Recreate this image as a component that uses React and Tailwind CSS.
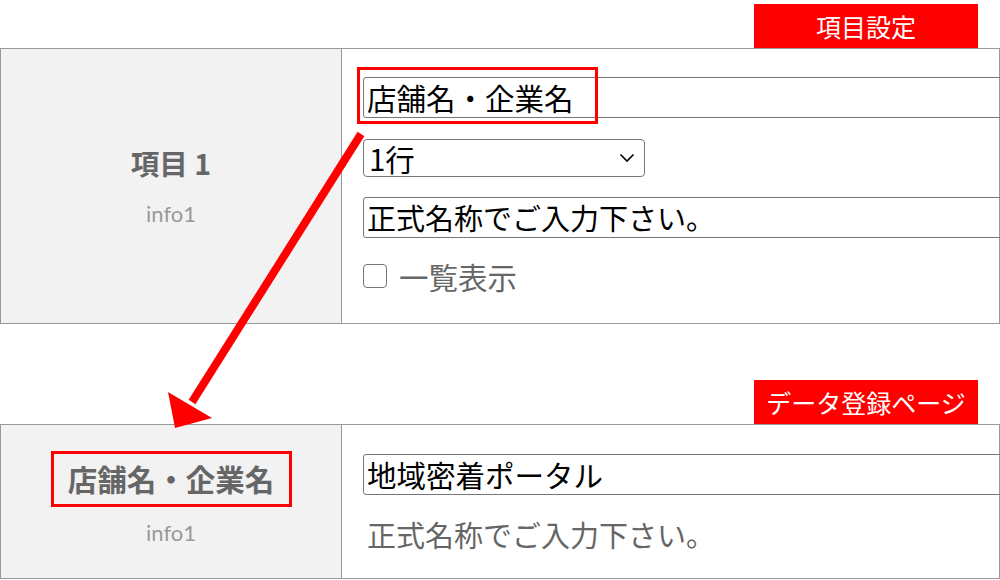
import React from "react";

const JP = { fontFamily: '"Noto Sans CJK JP", "Noto Sans", sans-serif' };
const LATO = { fontFamily: '"Lato", "Noto Sans", sans-serif' };

function Badge({ children }) {
  return (
    <div className="flex justify-end pr-[22px]">
      <div className="w-[224px] h-[44px] bg-[#ff0000] text-white text-[25px] leading-none flex items-center justify-center">
        {children}
      </div>
    </div>
  );
}

function Chevron() {
  return (
    <svg width="16" height="10" viewBox="0 0 16 10" className="block">
      <path d="M1.5 1.5 L8 8 L14.5 1.5" fill="none" stroke="#000" strokeWidth="1.6" />
    </svg>
  );
}

export default function App() {
  return (
    <div
      className="relative w-[1000px] h-[580px] overflow-hidden bg-white"
      style={JP}
    >
      <div className="pt-[4px]">
        <Badge>項目設定</Badge>
      </div>

      {/* Top table */}
      <div className="flex w-[1000px] h-[276px] border border-[#999]">
        <div className="w-[341px] shrink-0 bg-[#f2f2f2] border-r border-[#999] flex flex-col items-center justify-center pb-[2px]">
          <div className="text-[28.5px] font-bold text-[#666] leading-[40px]">項目 1</div>
          <div className="text-[22px] text-[#999] leading-[28px] mt-[17px]" style={LATO}>
            info1
          </div>
        </div>
        <div className="relative flex-1 min-w-0 pl-[21px] pt-[28px]">
          <div className="w-[700px] h-[41px] border border-[#767676] rounded-[3px] pl-[3px] text-[29.5px] leading-[39px] text-black whitespace-nowrap">
            店舗名・企業名
          </div>
          <div className="mt-[21px] w-[282px] h-[38px] border border-[#767676] rounded-[4px] pl-[5px] pr-[9px] flex items-center justify-between text-[29.5px] text-black">
            <span className="leading-[36px]">1行</span>
            <Chevron />
          </div>
          <div className="mt-[20px] w-[700px] h-[41px] border border-[#767676] rounded-[3px] pl-[3px] text-[29px] leading-[39px] text-black whitespace-nowrap">
            正式名称でご入力下さい。
          </div>
          <div className="mt-[20px] flex items-center gap-[12px] text-[29.5px] text-[#666] leading-[36px]">
            <span className="w-[24px] h-[24px] border-[1.5px] border-[#767676] rounded-[4px] bg-white shrink-0" />
            <span>一覧表示</span>
          </div>
          <div className="absolute left-[15px] top-[18px] w-[241px] h-[57px] border-[3px] border-[#ff0000]" />
        </div>
      </div>

      <div className="mt-[56px]">
        <Badge>データ登録ページ</Badge>
      </div>

      {/* Bottom table */}
      <div className="flex w-[1000px] h-[155px] border border-[#999]">
        <div className="w-[341px] shrink-0 bg-[#f2f2f2] border-r border-[#999] flex flex-col items-center justify-center pb-[6px]">
          <div className="border-[3px] border-[#ff0000] w-[241px] h-[56px] flex items-center justify-center text-[29.5px] font-bold text-[#666] leading-none">
            店舗名・企業名
          </div>
          <div className="text-[22px] text-[#999] leading-[28px] mt-[12px]" style={LATO}>
            info1
          </div>
        </div>
        <div className="flex-1 min-w-0 pl-[21px] pt-[29px]">
          <div className="w-[700px] h-[41px] border border-[#767676] rounded-[3px] pl-[3px] text-[29.5px] leading-[39px] text-black whitespace-nowrap">
            地域密着ポータル
          </div>
          <div className="mt-[18px] text-[29px] text-[#666] leading-[42px] pl-[4px]">
            正式名称でご入力下さい。
          </div>
        </div>
      </div>

      {/* Arrow overlay */}
      <svg
        className="absolute left-0 top-0 pointer-events-none"
        width="1000"
        height="580"
        viewBox="0 0 1000 580"
      >
        <line x1="361" y1="134" x2="192" y2="402" stroke="#ff0000" strokeWidth="8" />
        <polygon points="175,428 168,392 212,418" fill="#ff0000" />
      </svg>
    </div>
  );
}
